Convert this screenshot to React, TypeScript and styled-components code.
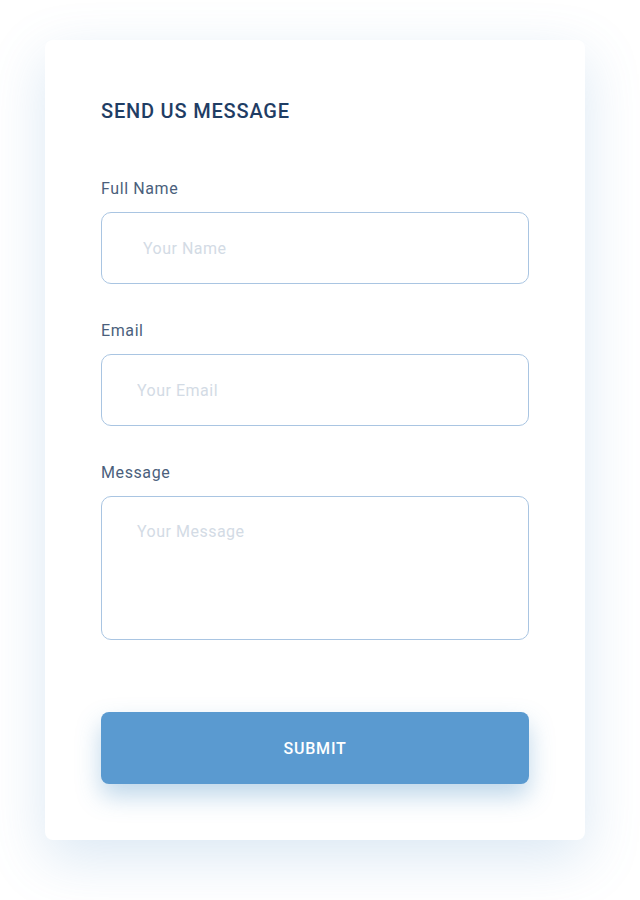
import React from "react";
import styled, { createGlobalStyle } from "styled-components";

const Global = createGlobalStyle`
  html, body { margin: 0; padding: 0; background: #ffffff; }
  body { font-family: Roboto, "Liberation Sans", Arial, sans-serif; }
  * { box-sizing: border-box; }
`;

const Page = styled.div`
  padding: 40px 0 60px 45px;
`;

const Card = styled.form`
  width: 540px;
  height: 800px;
  background: #ffffff;
  border-radius: 8px;
  box-shadow: 0 18px 55px rgba(90, 150, 205, 0.22);
  padding: 56px;
  display: flex;
  flex-direction: column;
`;

const Title = styled.h2`
  margin: 0 0 53px;
  font-size: 20px;
  line-height: 30px;
  font-weight: 500;
  letter-spacing: 0.8px;
  color: #1f3d64;
`;

const Field = styled.div`
  display: flex;
  flex-direction: column;
  margin-bottom: 37px;
  &:last-of-type { margin-bottom: 0; }
`;

const Label = styled.label`
  font-size: 16px;
  line-height: 20px;
  letter-spacing: 0.6px;
  color: #4b5f7c;
  margin-bottom: 13px;
`;

const Input = styled.input<{ $indent: number }>`
  height: 72px;
  width: 100%;
  border: 1px solid #a9c5e2;
  border-radius: 10px;
  padding: 0 0 0 ${(p) => p.$indent}px;
  font-family: Roboto, "Liberation Sans", Arial, sans-serif;
  font-size: 16px;
  letter-spacing: 0.5px;
  color: #333;
  outline: none;
  &::placeholder { color: #d3dbe5; }
`;

const TextArea = styled.textarea`
  height: 144px;
  width: 100%;
  border: 1px solid #a9c5e2;
  border-radius: 10px;
  padding: 25px 0 0 35px;
  font-family: Roboto, "Liberation Sans", Arial, sans-serif;
  font-size: 16px;
  line-height: 20px;
  letter-spacing: 0.5px;
  resize: none;
  outline: none;
  &::placeholder { color: #d3dbe5; }
`;

const Button = styled.button`
  margin-top: 72px;
  height: 72px;
  width: 100%;
  border: none;
  border-radius: 8px;
  background: #5a9ad0;
  color: #ffffff;
  font-family: Roboto, "Liberation Sans", Arial, sans-serif;
  font-size: 16px;
  font-weight: 500;
  letter-spacing: 0.8px;
  box-shadow: 0 12px 24px rgba(70, 140, 195, 0.35);
  cursor: pointer;
`;

export default function App() {
  return (
    <>
      <Global />
      <Page>
        <Card onSubmit={(e) => e.preventDefault()}>
          <Title>SEND US MESSAGE</Title>
          <Field>
            <Label>Full Name</Label>
            <Input $indent={41} placeholder="Your Name" />
          </Field>
          <Field>
            <Label>Email</Label>
            <Input $indent={35} placeholder="Your Email" />
          </Field>
          <Field>
            <Label>Message</Label>
            <TextArea placeholder="Your Message" />
          </Field>
          <Button type="submit">SUBMIT</Button>
        </Card>
      </Page>
    </>
  );
}
